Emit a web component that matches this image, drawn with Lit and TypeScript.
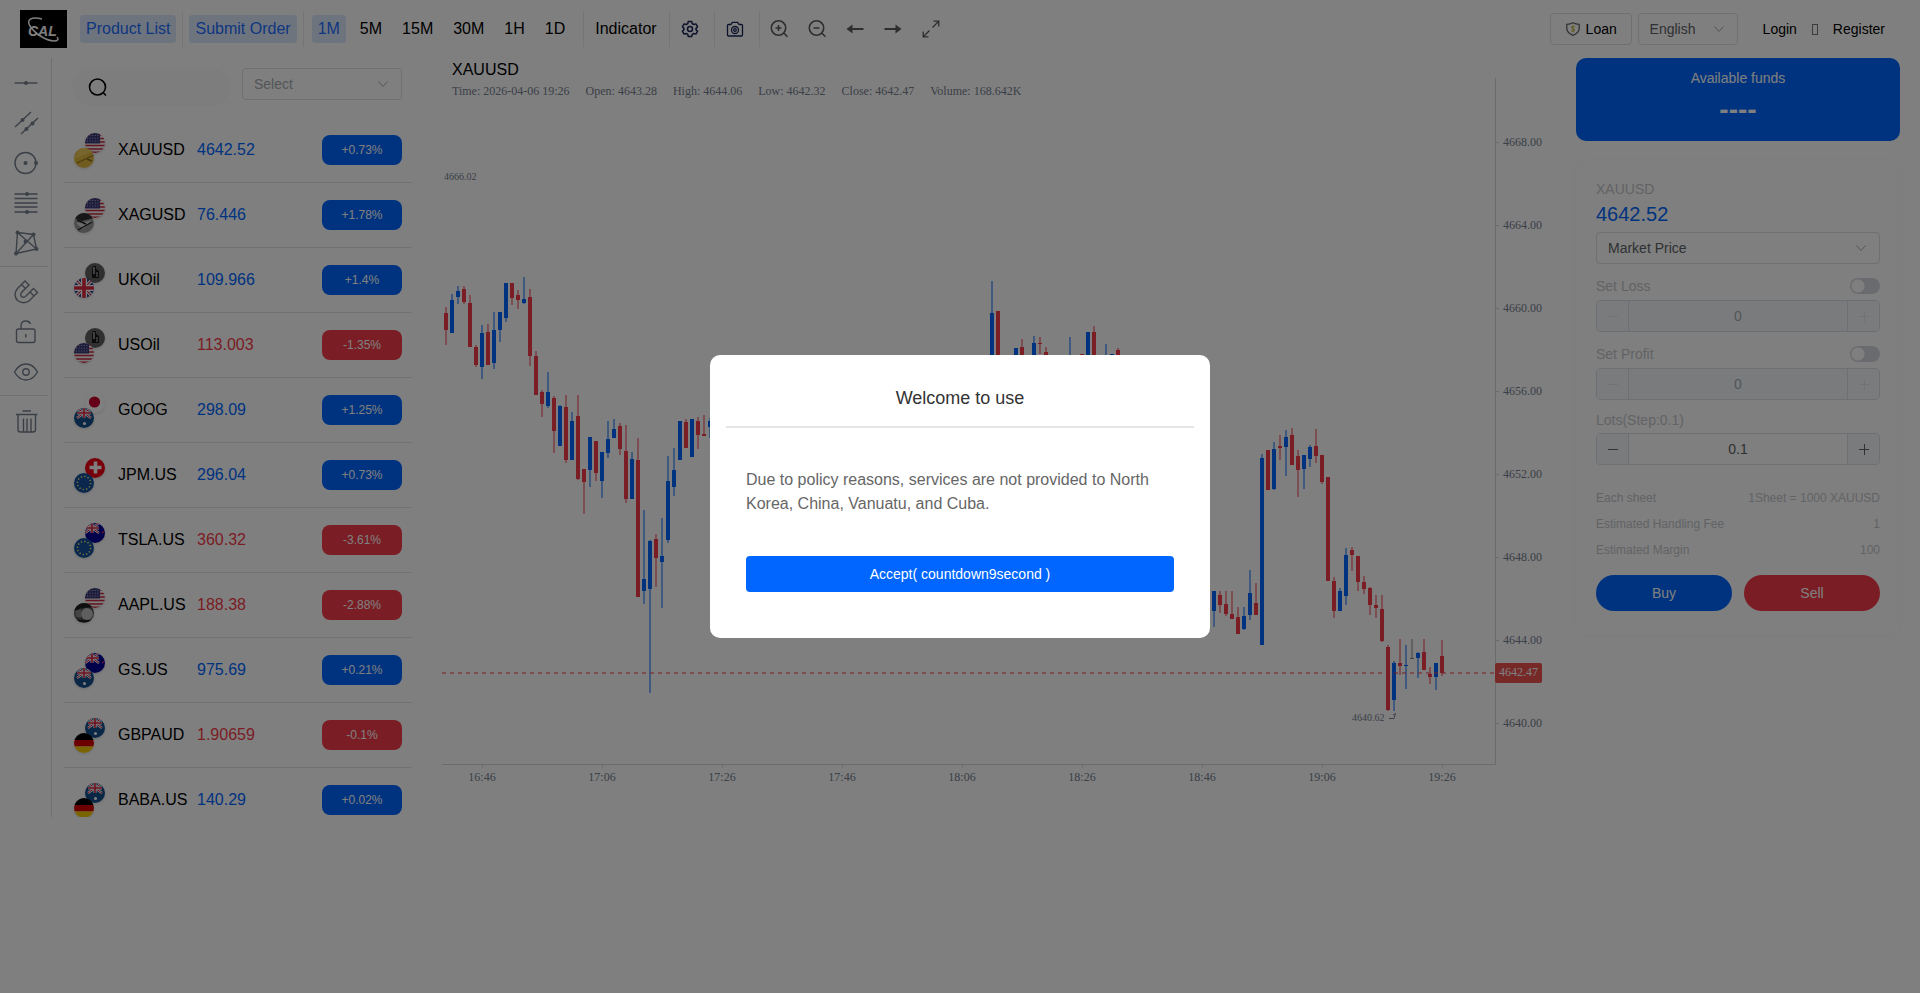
import { LitElement, html, svg, css } from "lit";
import { customElement, state } from "lit/decorators.js";
import { classMap } from "lit/directives/class-map.js";

type Quote = { name: string; price: string; change: string; up: boolean; base: string; quote: string };

const QUOTES: Quote[] = [
  { name: "XAUUSD", price: "4642.52", change: "+0.73%", up: true, base: "gold", quote: "us" },
  { name: "XAGUSD", price: "76.446", change: "+1.78%", up: true, base: "silver", quote: "us" },
  { name: "UKOil", price: "109.966", change: "+1.4%", up: true, base: "gb", quote: "oil" },
  { name: "USOil", price: "113.003", change: "-1.35%", up: false, base: "us", quote: "oil" },
  { name: "GOOG", price: "298.09", change: "+1.25%", up: true, base: "au", quote: "jp" },
  { name: "JPM.US", price: "296.04", change: "+0.73%", up: true, base: "eu", quote: "ch" },
  { name: "TSLA.US", price: "360.32", change: "-3.61%", up: false, base: "eu", quote: "nz" },
  { name: "AAPL.US", price: "188.38", change: "-2.88%", up: false, base: "plat", quote: "us" },
  { name: "GS.US", price: "975.69", change: "+0.21%", up: true, base: "au", quote: "nz" },
  { name: "GBPAUD", price: "1.90659", change: "-0.1%", up: false, base: "de", quote: "au" },
  { name: "BABA.US", price: "140.29", change: "+0.02%", up: true, base: "de", quote: "au" },
];

const unionJack = svg`
  <path d="M0 0L14 10M14 0L0 10" stroke="#fff" stroke-width="2.4"/>
  <path d="M0 0L14 10M14 0L0 10" stroke="#d8213b" stroke-width="1"/>
  <path d="M7 0V10M0 5H14" stroke="#fff" stroke-width="3"/>
  <path d="M7 0V10M0 5H14" stroke="#d8213b" stroke-width="1.6"/>`;

const FLAGS: Record<string, unknown> = {
  us: svg`<rect width="20" height="20" fill="#f4f4f4"/>
    <path d="M0 2H20M0 5.5H20M0 9H20M0 12.5H20M0 16H20M0 19.3H20" stroke="#c8283c" stroke-width="1.6"/>
    <rect width="15" height="10.5" fill="#3c3b78"/>
    <path d="M2 2.5H14M2 5.2H14M2 8H14" stroke="#c8c8e6" stroke-width=".8" stroke-dasharray="1 1.6"/>`,
  gold: svg`<rect width="20" height="20" fill="#dfb93c"/>
    <path d="M0 11L18 4V0H6Z" fill="#eccb58"/>
    <path d="M3 15L20 7" stroke="#8a6a20" stroke-width="1"/>
    <path d="M13 11L18 13" stroke="#8a6a20" stroke-width="1.4"/>`,
  silver: svg`<rect width="20" height="20" fill="#9a9a9a"/>
    <path d="M0 0H20V5L8 8L0 5Z" fill="#2e2e2e"/>
    <path d="M2 10L18 8L9 16Z" fill="#d4d4d4"/>
    <path d="M4 17L18 9M3 7L12 11" stroke="#1e1e1e" stroke-width="1.4"/>
    <path d="M0 16L9 20H0Z" fill="#4a4a4a"/>`,
  plat: svg`<rect width="20" height="20" fill="#4e4e4e"/>
    <path d="M0 0H20V4L8 5L0 8Z" fill="#1e1e1e"/>
    <circle cx="13" cy="11" r="6" fill="#bcbcbc"/>
    <path d="M1 8L7 6V15L2 14Z" fill="#8a8a8a"/>
    <path d="M3 18L17 18" stroke="#202020" stroke-width="2"/>`,
  oil: svg`<rect width="20" height="20" fill="#606060"/>
    <path d="M8 3H11V6L14 8V15H7V7Z" fill="#161616"/>
    <path d="M9 4V11" stroke="#c8c8c8" stroke-width="1.2"/>
    <path d="M12 9V14" stroke="#828282" stroke-width="1.5"/>`,
  gb: svg`<rect width="20" height="20" fill="#283c8c"/>
    <path d="M0 0L20 20M20 0L0 20" stroke="#fff" stroke-width="3.4"/>
    <path d="M0 0L20 20M20 0L0 20" stroke="#d22840" stroke-width="1.2"/>
    <path d="M10 0V20M0 10H20" stroke="#fff" stroke-width="6"/>
    <path d="M10 0V20M0 10H20" stroke="#dc2840" stroke-width="3.6"/>`,
  jp: svg`<rect width="20" height="20" fill="#fff"/><circle cx="9.500" cy="9" r="5.600" fill="#c8002e"/>`,
  ch: svg`<rect width="20" height="20" fill="#f00014"/>
    <path d="M10.500 3.500V15.500M4.500 9.500H16.500" stroke="#fff" stroke-width="3.600"/>`,
  eu: svg`<rect width="20" height="20" fill="#14509a"/>
    <circle cx="10" cy="10" r="6.600" fill="none" stroke="#ffe678" stroke-width="1.500" stroke-dasharray="1.300 2.156"/>`,
  au: svg`<rect width="20" height="20" fill="#14508c"/><g transform="translate(3 0)">${unionJack}</g>
    <circle cx="10.500" cy="15.500" r="1.500" fill="#fff"/>`,
  nz: svg`<rect width="20" height="20" fill="#000096"/>${unionJack}
    <path d="M17 10L18.600 8.500" stroke="#e63250" stroke-width="1.200"/>`,
  de: svg`<rect width="20" height="7" fill="#000"/><rect y="7" width="20" height="6.500" fill="#d80000"/>
    <rect y="13.500" width="20" height="6.500" fill="#f5c800"/>`,
};

/* Each candle: slot index, colour, then the y of wick top, body top, body bottom, wick bottom. */
type Candle = [number, "r" | "b" | "g", number, number, number, number];
const CANDLES: Candle[] = [
  [0, "r", 307, 313, 330, 345], [1, "b", 294, 300, 333, 333], [2, "b", 286, 291, 297, 304],
  [3, "r", 286, 289, 302, 304], [4, "r", 295, 303, 347, 347], [5, "r", 345, 347, 365, 367],
  [6, "b", 325, 333, 367, 379], [7, "r", 324, 332, 365, 365], [8, "b", 312, 330, 363, 369],
  [9, "b", 312, 312, 330, 342], [10, "b", 283, 283, 318, 322], [11, "r", 283, 283, 298, 305],
  [12, "r", 290, 295, 300, 309], [13, "b", 277, 299, 303, 304], [14, "r", 289, 297, 356, 366],
  [15, "r", 351, 356, 395, 395], [16, "r", 390, 392, 404, 417], [17, "b", 372, 392, 406, 408],
  [18, "r", 396, 398, 431, 453], [19, "b", 405, 406, 446, 446], [20, "r", 395, 407, 460, 463],
  [21, "b", 412, 421, 460, 460], [22, "r", 395, 416, 479, 480], [23, "r", 469, 469, 482, 514],
  [24, "b", 437, 437, 470, 487], [25, "r", 441, 441, 473, 481], [26, "b", 452, 452, 481, 498],
  [27, "b", 421, 439, 453, 458], [28, "b", 419, 429, 438, 438], [29, "r", 423, 426, 449, 455],
  [30, "r", 425, 451, 499, 503], [31, "b", 452, 459, 499, 499], [32, "r", 438, 460, 597, 597],
  [33, "b", 510, 579, 591, 604], [34, "b", 540, 541, 589, 693], [35, "r", 534, 539, 558, 587],
  [36, "b", 518, 556, 562, 608], [37, "b", 456, 481, 540, 543], [38, "b", 448, 470, 487, 496],
  [39, "b", 421, 421, 460, 460], [40, "r", 419, 422, 448, 448], [41, "b", 419, 419, 457, 457],
  [42, "r", 417, 421, 435, 449], [43, "r", 415, 434, 436, 436], [44, "b", 418, 421, 427, 438],
  [91, "b", 281, 313, 400, 400], [92, "r", 311, 311, 380, 380], [95, "b", 348, 348, 380, 380],
  [96, "r", 339, 347, 380, 380], [98, "b", 336, 343, 380, 380], [99, "r", 337, 343, 344, 354],
  [100, "r", 347, 352, 380, 380], [104, "b", 337, 360, 380, 380], [106, "r", 354, 354, 380, 380],
  [107, "b", 332, 332, 380, 380], [108, "r", 326, 332, 380, 380], [110, "b", 344, 365, 380, 380],
  [111, "b", 354, 354, 380, 380], [112, "r", 348, 350, 380, 380],
  [128, "b", 591, 591, 611, 627], [129, "r", 591, 595, 605, 613], [130, "r", 591, 604, 614, 616],
  [131, "r", 591, 614, 619, 619], [132, "r", 607, 617, 634, 634], [133, "b", 607, 616, 629, 630],
  [134, "b", 570, 593, 615, 620], [135, "r", 583, 603, 615, 615], [136, "b", 454, 458, 645, 645],
  [137, "r", 450, 450, 490, 490], [138, "b", 442, 449, 489, 490], [139, "r", 435, 446, 448, 460],
  [140, "b", 430, 437, 447, 476], [141, "r", 428, 435, 465, 465], [142, "r", 450, 456, 470, 497],
  [143, "b", 455, 455, 469, 489], [144, "b", 445, 447, 459, 467], [145, "r", 429, 446, 456, 463],
  [146, "r", 455, 455, 482, 484], [147, "r", 477, 477, 581, 581], [148, "r", 577, 581, 611, 618],
  [149, "b", 588, 591, 611, 611], [150, "b", 548, 555, 596, 605], [151, "r", 547, 550, 555, 571],
  [152, "r", 556, 556, 582, 591], [153, "r", 576, 582, 589, 594], [154, "r", 587, 588, 605, 615],
  [155, "r", 595, 605, 608, 618], [156, "r", 595, 609, 641, 642], [157, "r", 645, 647, 710, 711],
  [158, "b", 661, 663, 700, 711], [159, "r", 639, 663, 666, 675], [160, "b", 645, 665, 666, 689],
  [161, "g", 639, 658, 659, 659], [162, "b", 652, 653, 658, 678], [163, "r", 639, 652, 670, 670],
  [164, "r", 667, 674, 677, 684], [165, "b", 663, 663, 677, 690], [166, "r", 640, 656, 673, 676],
];
const CANDLE_FILL = { r: "#f53b48", b: "#0066ff", g: "#888888" };

const PRICE_TICKS = ["4668.00", "4664.00", "4660.00", "4656.00", "4652.00", "4648.00", "4644.00", "4640.00"];
const TIME_TICKS = ["16:46", "17:06", "17:26", "17:46", "18:06", "18:26", "18:46", "19:06", "19:26"];

const FONT = css`"Liberation Sans", Arial, sans-serif`;
const SERIF = css`"Liberation Serif", "Times New Roman", serif`;

const chevron = html`<svg class="chevron" viewBox="0 0 12 12" width="12" height="12" aria-hidden="true">
  <path d="M1.500 3.500L6 8.500L10.500 3.500" fill="none" stroke="#a8abb2" stroke-width="1"/></svg>`;

@customElement("price-chart")
export class PriceChart extends LitElement {
  static styles = css`
    :host { display: block; }
    svg { display: block; width: 100%; height: auto; font-family: ${SERIF}; font-size: 12px; fill: #76808f; }
    .tag { fill: #fff; }
    .mark { font-size: 10px; fill: #76808f; }
  `;

  render() {
    return html`<svg viewBox="442 78 1114 712" role="img" aria-label="XAUUSD candles">
      <path d="M1495.500 78V764.500H442" fill="none" stroke="#d6d6d6" />
      ${PRICE_TICKS.map((label, i) => {
        const y = Math.round(141.5 + i * 83);
        return svg`<path d="M1496 ${y}.5h3" stroke="#d6d6d6"/><text x="1503" y=${y + 4}>${label}</text>`;
      })}
      ${TIME_TICKS.map((label, i) => {
        const x = 482 + i * 120;
        return svg`<path d="M${x}.5 765v3" stroke="#d6d6d6"/><text x=${x} y="781" text-anchor="middle">${label}</text>`;
      })}
      ${CANDLES.map(([slot, tone, high, top, bottom, low]) => {
        const x = 446 + slot * 6;
        return svg`<g fill=${CANDLE_FILL[tone]}>
          <rect x=${x - 1} y=${high} width="2" height=${low - high} opacity=".5"/>
          <rect x=${x - 2} y=${top} width="4" height=${Math.max(1, bottom - top)}/></g>`;
      })}
      <path d="M442 673H1495" stroke="#f53b48" stroke-width="2" stroke-dasharray="4 4" opacity=".5"/>
      <rect x="1495" y="663" width="47" height="20" rx="2" fill="#ef5350"/>
      <text class="tag" x="1499" y="676">4642.47</text>
      <text class="mark" x="444" y="180">4666.02</text>
      <text class="mark" x="1352" y="721">4640.62</text>
      <path d="M1389 718.500H1394L1395.500 713.500M1393 715L1395.500 713.500" fill="none" stroke="#76808f"/>
    </svg>`;
  }
}

@customElement("app-root")
export class AppRoot extends LitElement {
  @state() private interval = "1M";
  @state() private countdown = 9;

  static styles = css`
    :host { display: block; min-height: 100vh; background: #fff; color: #000; font-family: ${FONT}; font-size: 14px; }
    * { box-sizing: border-box; }
    button, select, input { font: inherit; color: inherit; margin: 0; }
    button { background: none; border: 0; padding: 0; cursor: pointer; }
    a { color: inherit; text-decoration: none; }
    svg { display: block; flex: none; }

    .header { display: flex; align-items: center; justify-content: space-between; height: 58px; padding: 0 35px 0 20px; }
    .tools, .account, .intervals, .icons { display: flex; align-items: center; }
    .tools { font-size: 16px; }
    .logo { margin-right: 13px; }
    .logo-text { font: italic bold 14px ${FONT}; fill: #fff; }
    .chip { height: 28px; padding: 0 6px; border-radius: 3px; }
    .chip.on { background: #dde9fd; color: #1a6eff; }
    .rule { width: 1px; height: 36px; background: #ebebeb; margin: 0 6px; }
    .intervals { gap: 8px; padding: 0 12px 0 2px; }
    .boxed { height: 36px; border-left: 1px solid #ebebeb; }
    .indicator { padding: 0 12px 0 11px; }
    .icon-cell { width: 45px; padding-right: 4px; display: grid; place-items: center; }
    .icons { height: 36px; border-left: 1px solid #ebebeb; }
    .icons button { width: 38px; display: grid; place-items: center; }
    .account { gap: 6px; }
    .loan { display: flex; align-items: center; gap: 6px; width: 82px; height: 32px; padding: 0 15px; border: 1px solid #dcdfe6; border-radius: 4px; }
    .links { display: flex; align-items: center; gap: 15px; margin-left: 19px; }
    .sep { width: 6px; height: 11px; border: 1px solid #777; }

    .picker { position: relative; display: block; }
    .picker select { appearance: none; display: block; width: 100%; height: 32px; padding: 0 30px 0 11px; border: 1px solid #dcdfe6; border-radius: 4px; background: transparent; color: #606266; }
    .picker .chevron { position: absolute; right: 13px; top: 10px; pointer-events: none; }
    .picker.empty select { color: #a8abb2; }
    .language { width: 100px; }

    .main { display: grid; grid-template-columns: 52px 348px minmax(0, 1fr) 324px; column-gap: 12px; height: calc(100vh - 234px); padding-right: 20px; }
    .drawing { display: flex; flex-direction: column; padding-top: 5px; border-right: 1px solid #dedede; color: #76808f; }
    .drawing button { height: 40px; display: grid; place-items: center; }
    .drawing hr { width: 48px; margin: 3px 3px 5px 0; border: 0; border-top: 1px solid #dedede; }

    .market { overflow: hidden; box-shadow: 0 0 8px rgba(0, 0, 0, .02); }
    .filter { display: flex; justify-content: space-between; align-items: flex-start; height: 60px; padding: 10px 10px 0 8px; }
    .search { display: flex; align-items: center; width: 158px; height: 38px; padding-left: 16px; border-radius: 19px; background: #fbfbfb; }
    .search input { width: 110px; border: 0; outline: 0; background: transparent; }
    .filter .picker { width: 160px; }
    table { width: 100%; border-collapse: separate; border-spacing: 0; table-layout: fixed; font-size: 16px; }
    td { height: 65px; padding: 0; border-bottom: 1px solid #e4e4e4; white-space: nowrap; }
    .col-pair { width: 54px; }
    .col-name { width: 79px; }
    .col-change { width: 90px; }
    .pair { position: relative; width: 31px; height: 35px; margin-left: 10px; }
    .pair svg { position: absolute; border-radius: 50%; box-shadow: 0 1px 3px rgba(0, 0, 0, .15); }
    .pair .back { right: 0; top: 0; }
    .pair .front { left: 0; bottom: 0; }
    .up { color: #0066ff; }
    .down { color: #f53b48; }
    .change { display: block; width: 80px; height: 30px; border-radius: 8px; font-size: 12px; line-height: 30px; text-align: center; color: #fff; background: #f53b48; }
    .change.rise { background: #0066ff; }

    .chart { height: 750px; padding: 0 8px 0 18px; box-shadow: 0 0 8px rgba(0, 0, 0, .02); }
    .chart-head { height: 20px; padding-left: 10px; }
    .symbol { margin: 0; padding-top: 2px; font-size: 16px; font-weight: normal; line-height: 20px; }
    .ohlc { display: flex; gap: 16px; margin: 0; font-family: ${SERIF}; font-size: 12px; line-height: 22px; color: #76808f; white-space: nowrap; }

    .side { color: #c4c6ca; }
    .funds { height: 83px; padding-top: 12px; border-radius: 10px; background: #0066ff; color: #fff; text-align: center; line-height: 16px; }
    .funds strong { display: block; padding-top: 8px; font-size: 28px; line-height: 32px; }
    .order { margin-top: 20px; padding: 17px 20px 24px; border-radius: 10px; box-shadow: 0 0 8px rgba(0, 0, 0, .03); }
    .order-symbol { line-height: 18px; padding-top: 2px; }
    .order-price { padding: 4px 0 5px; font-size: 20px; line-height: 25px; }
    .line { display: flex; justify-content: space-between; align-items: center; height: 16px; margin: 14px 0 6px; }
    .toggle { appearance: none; width: 30px; height: 16px; margin: 0; border-radius: 8px; background: radial-gradient(circle at 8px 8px, #fff 6px, #d4d7de 7px); }
    .lots { margin: 12px 0 5px; }
    .stepper { display: grid; grid-template-columns: 31px minmax(0, 1fr) 31px; height: 32px; border: 1px solid #dcdfe6; border-radius: 4px; overflow: hidden; color: #606266; }
    .stepper input { width: 100%; border: 1px solid #dcdfe6; border-width: 0 1px; border-radius: 0; outline: 0; padding: 0; text-align: center; background: #fff; }
    .stepper button { display: grid; place-items: center; background: #f5f7fa; }
    .stepper.off input { background: #f5f7fa; color: #a8abb2; }
    .stepper.off button { color: #e4e7ed; }
    .facts { margin: 20px 0 12px; font-size: 12px; line-height: 26px; }
    .facts div { display: flex; justify-content: space-between; }
    .facts dd { margin: 0; }
    .actions { display: grid; grid-template-columns: 1fr 1fr; gap: 12px; }
    .actions button { height: 36px; border-radius: 18px; color: #fff; background: #0066ff; }
    .actions .sell { background: #f53b48; }

    .overlay { position: fixed; inset: 0; display: grid; place-items: center; background: rgba(0, 0, 0, .5); }
    .modal { width: 500px; max-width: 100%; padding: 31px 16px 46px; border-radius: 10px; background: #fff; }
    .modal h2 { margin: 0; padding-bottom: 16px; border-bottom: 2px solid #e5e5e5; font-size: 18px; line-height: 24px; font-weight: normal; text-align: center; color: #333; }
    .modal-body { padding: 40px 20px 0; }
    .modal p { margin: 0 0 40px; font-size: 16px; line-height: 24px; color: #666; }
    .accept { width: 100%; height: 36px; border-radius: 4px; background: #0066ff; color: #fff; }
  `;

  private flag(kind: string, place: string) {
    return html`<svg class=${place} viewBox="0 0 20 20" width="20" height="20" aria-hidden="true">${FLAGS[kind]}</svg>`;
  }

  private stepper(id: string, value: string, off: boolean) {
    return html`<div class=${classMap({ stepper: true, off })}>
      <button aria-label="Decrease" ?disabled=${off}><svg width="12" height="12" viewBox="0 0 12 12"><path d="M1 6.500H11" stroke="currentColor"/></svg></button>
      <input id=${id} .value=${value} ?disabled=${off} />
      <button aria-label="Increase" ?disabled=${off}><svg width="12" height="12" viewBox="0 0 12 12"><path d="M1 6.500H11M6.500 1V12" stroke="currentColor"/></svg></button>
    </div>`;
  }

  private header() {
    return html`<header class="header">
      <div class="tools">
        <svg class="logo" width="47" height="38" viewBox="0 0 47 38" role="img" aria-label="CAL">
          <rect width="47" height="38" fill="#000"/>
          <text class="logo-text" x="8" y="26">CAL</text>
          <path d="M22 9C11 6 6 10 10 16C15 24 27 31 34 31C38 31 39 29 37 27" fill="none" stroke="#fff" stroke-width="1.500"/>
        </svg>
        <button class="chip on">Product List</button>
        <span class="rule"></span>
        <button class="chip on">Submit Order</button>
        <span class="rule"></span>
        <div class="intervals">
          ${["1M", "5M", "15M", "30M", "1H", "1D"].map((i) => html`<button
            class=${classMap({ chip: true, on: i === this.interval })}
            @click=${() => (this.interval = i)}>${i}</button>`)}
        </div>
        <button class="boxed indicator">Indicator</button>
        <button class="boxed icon-cell" aria-label="Settings">
          <svg width="18" height="18" viewBox="0 0 18 18" fill="none" stroke="#1b2559" stroke-width="1.500" stroke-linejoin="round">
            <path d="M7.300 1.500H10.700L11.300 3.700L12.700 4.500L14.900 3.900L16.600 6.800L15 8.400V9.600L16.600 11.200L14.900 14.100L12.700 13.500L11.300 14.300L10.700 16.500H7.300L6.700 14.300L5.300 13.500L3.100 14.100L1.400 11.200L3 9.600V8.400L1.400 6.800L3.100 3.900L5.300 4.500L6.700 3.700Z"/>
            <circle cx="9" cy="9" r="2.500"/></svg>
        </button>
        <button class="boxed icon-cell" aria-label="Snapshot">
          <svg width="18" height="18" viewBox="0 0 18 18" fill="none" stroke="#1b2559" stroke-width="1.300" stroke-linejoin="round">
            <path d="M2.500 4.500H5L6.300 2.300H11.700L13 4.500H15.500Q16.500 4.500 16.500 5.500V15Q16.500 16 15.500 16H2.500Q1.500 16 1.500 15V5.500Q1.500 4.500 2.500 4.500Z"/>
            <circle cx="9" cy="10" r="3.500"/><circle cx="9" cy="10" r="1.300"/></svg>
        </button>
        <div class="icons">
          <button aria-label="Zoom in"><svg width="18" height="18" viewBox="0 0 18 18" fill="none" stroke="#5c5c5c" stroke-width="1.600"><circle cx="8.500" cy="8" r="7.200"/><path d="M13.800 13L17.500 16.800M5.500 8H11.500M8.500 5V11"/></svg></button>
          <button aria-label="Zoom out"><svg width="18" height="18" viewBox="0 0 18 18" fill="none" stroke="#5c5c5c" stroke-width="1.600"><circle cx="8.500" cy="8" r="7.200"/><path d="M13.800 13L17.500 16.800M5.500 8H11.500"/></svg></button>
          <button aria-label="Scroll left"><svg width="18" height="18" viewBox="0 0 18 18"><path d="M5 9H17.500" stroke="#5c5c5c" stroke-width="2"/><path d="M.5 9L6.500 4.500V13.500Z" fill="#5c5c5c"/></svg></button>
          <button aria-label="Scroll right"><svg width="18" height="18" viewBox="0 0 18 18"><path d="M.5 9H13" stroke="#5c5c5c" stroke-width="2"/><path d="M17.500 9L11.500 4.500V13.500Z" fill="#5c5c5c"/></svg></button>
          <button aria-label="Full screen"><svg width="18" height="18" viewBox="0 0 18 18" fill="none" stroke="#5c5c5c" stroke-width="1.300"><path d="M10.500 7.500L16.500 1.500M11.500 1.200H16.800V6.500M7.500 10.500L1.500 16.500M1.200 11.500V16.800H6.500"/></svg></button>
        </div>
      </div>
      <div class="account">
        <button class="loan">
          <svg width="14" height="14" viewBox="0 0 14 14" fill="none"><path d="M7 .8Q9.500 2.300 13.200 2.300V6.500Q13 11 7 13.300Q1 11 .8 6.500V2.300Q4.500 2.300 7 .8Z" stroke="#666" stroke-width="1.300"/><path d="M8.800 5Q7 3.600 5.600 4.800Q5 6.200 7 6.600Q9.200 7.200 8.400 8.800Q7 9.900 5.200 8.800M7 3.200V10.500" stroke="#c3b43c"/></svg>
          Loan</button>
        <label class="picker language"><select aria-label="Language"><option>English</option></select>${chevron}</label>
        <nav class="links"><a href="#login">Login</a><span class="sep"></span><a href="#register">Register</a></nav>
      </div>
    </header>`;
  }

  private drawing() {
    const tool = (label: string, art: unknown) => html`<button aria-label=${label}>
      <svg width="26" height="26" viewBox="0 0 26 26" fill="none" stroke="#76808f" stroke-width="1.400">${art}</svg></button>`;
    const dot = (x: number, y: number) => svg`<circle cx=${x} cy=${y} r="2" fill="#76808f" stroke="none"/>`;
    return html`<nav class="drawing">
      ${tool("Line", svg`<path d="M1.500 13H24.500"/>${dot(13, 13)}`)}
      ${tool("Channel", svg`<path d="M2 17L18 2M8 24L25 8"/>${dot(9.5, 10)}${dot(19.5, 13.5)}${dot(13.5, 19)}`)}
      ${tool("Circle", svg`<circle cx="12.500" cy="13" r="10.500"/>${dot(12.5, 13)}${dot(23, 13)}`)}
      ${tool("Fibonacci", svg`<path d="M1.500 4H24.500M1.500 8.500H24.500M1.500 13H24.500M1.500 17H24.500M1.500 22H24.500"/>${dot(14, 4)}${dot(14, 22)}`)}
      ${tool("Pattern", svg`<path d="M4.500 2.500L20.500 4.500L23.500 19L3 23.500ZL23.500 19M20.500 4.500L3 23.500"/>${dot(4.5, 2.5)}${dot(20.5, 4.5)}${dot(23.5, 19)}${dot(3, 23.5)}${dot(12.5, 11.5)}`)}
      <hr />
      ${tool("Magnet", svg`<path d="M12 2L4.500 9.500Q-.5 15.500 4.500 21.500Q11 26 16.500 21.500L24.500 13.500L20.500 9.500L12.500 17.500Q10 19 8.500 17.500Q7 16 8.500 13.500L16 6ZM8.500 5.500L12.500 9.500M17 13L21 17"/>`)}
      ${tool("Lock", svg`<rect x="3.500" y="10" width="18.500" height="13.500" rx="2"/><path d="M8 10V7Q8 2 13 2Q16.500 2 17.500 5M12.800 15V18.500"/>`)}
      ${tool("Visibility", svg`<path d="M1.500 13Q6 5 13 5Q20 5 24.500 13Q20 21 13 21Q6 21 1.500 13Z"/><circle cx="13" cy="13" r="3.200"/>`)}
      <hr />
      ${tool("Delete", svg`<path d="M3 6.500H24.500M9.500 3H18M5 6.500V21.500Q5 24 7.500 24H20Q22.500 24 22.500 21.500V6.500M10.500 10.500V24M14 10.500V24M18 10.500V24"/>`)}
    </nav>`;
  }

  private market() {
    return html`<section class="market">
      <div class="filter">
        <label class="search">
          <svg width="20" height="20" viewBox="0 0 20 20" fill="none" stroke="#000" stroke-width="1.600"><circle cx="9.500" cy="10" r="8"/><path d="M15 15.500L18 18.500"/></svg>
          <input type="text" aria-label="Search" />
        </label>
        <label class="picker empty"><select aria-label="Category"><option>Select</option></select>${chevron}</label>
      </div>
      <table>
        <colgroup><col class="col-pair" /><col class="col-name" /><col /><col class="col-change" /></colgroup>
        <tbody>
          ${QUOTES.map((q) => html`<tr>
            <td><div class="pair">${this.flag(q.quote, "back")}${this.flag(q.base, "front")}</div></td>
            <td>${q.name}</td>
            <td class=${q.up ? "up" : "down"}>${q.price}</td>
            <td><span class=${classMap({ change: true, rise: q.up })}>${q.change}</span></td>
          </tr>`)}
        </tbody>
      </table>
    </section>`;
  }

  private order() {
    return html`<aside class="side">
      <div class="funds">Available funds<strong>----</strong></div>
      <section class="order">
        <div class="order-symbol">XAUUSD</div>
        <div class="order-price up">4642.52</div>
        <label class="picker"><select aria-label="Order type"><option>Market Price</option></select>${chevron}</label>
        <div class="line"><label for="loss">Set Loss</label><input class="toggle" type="checkbox" aria-label="Enable loss" /></div>
        ${this.stepper("loss", "0", true)}
        <div class="line"><label for="profit">Set Profit</label><input class="toggle" type="checkbox" aria-label="Enable profit" /></div>
        ${this.stepper("profit", "0", true)}
        <div class="line lots"><label for="lots">Lots(Step:0.1)</label></div>
        ${this.stepper("lots", "0.1", false)}
        <dl class="facts">
          <div><dt>Each sheet</dt><dd>1Sheet = 1000 XAUUSD</dd></div>
          <div><dt>Estimated Handling Fee</dt><dd>1</dd></div>
          <div><dt>Estimated Margin</dt><dd>100</dd></div>
        </dl>
        <div class="actions"><button>Buy</button><button class="sell">Sell</button></div>
      </section>
    </aside>`;
  }

  render() {
    return html`
      ${this.header()}
      <main class="main">
        ${this.drawing()} ${this.market()}
        <section class="chart">
          <div class="chart-head">
            <h1 class="symbol">XAUUSD</h1>
            <p class="ohlc">
              <span>Time: 2026-04-06 19:26</span><span>Open: 4643.28</span><span>High: 4644.06</span>
              <span>Low: 4642.32</span><span>Close: 4642.47</span><span>Volume: 168.642K</span>
            </p>
          </div>
          <price-chart></price-chart>
        </section>
        ${this.order()}
      </main>
      <div class="overlay">
        <div class="modal" role="dialog" aria-modal="true" aria-labelledby="welcome">
          <h2 id="welcome">Welcome to use</h2>
          <div class="modal-body">
            <p>Due to policy reasons, services are not provided to North Korea, China, Vanuatu, and Cuba.</p>
            <button class="accept">Accept( countdown${this.countdown}second )</button>
          </div>
        </div>
      </div>`;
  }
}
